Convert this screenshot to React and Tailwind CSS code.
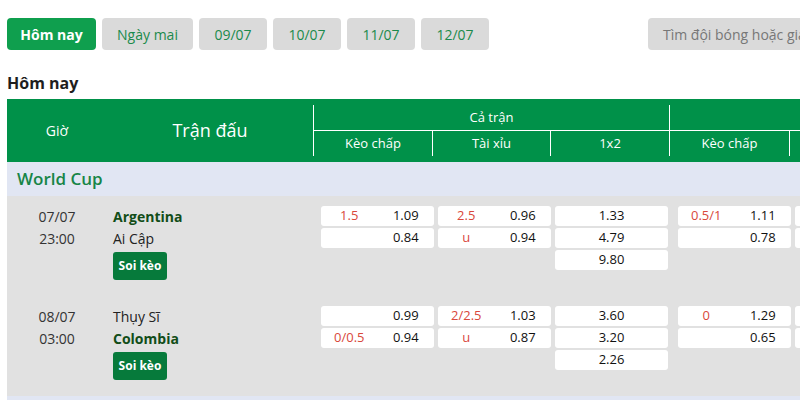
import React from 'react';

const tabs = ['Hôm nay', 'Ngày mai', '09/07', '10/07', '11/07', '12/07'];

const matches = [
  {
    date: '07/07',
    time: '23:00',
    home: 'Argentina',
    away: 'Ai Cập',
    favHome: true,
    ft: {
      hdp: [['1.5', '1.09'], ['', '0.84']],
      ou: [['2.5', '0.96'], ['u', '0.94']],
      x12: ['1.33', '4.79', '9.80'],
    },
    h1: { hdp: [['0.5/1', '1.11'], ['', '0.78']] },
  },
  {
    date: '08/07',
    time: '03:00',
    home: 'Thụy Sĩ',
    away: 'Colombia',
    favHome: false,
    ft: {
      hdp: [['', '0.99'], ['0/0.5', '0.94']],
      ou: [['2/2.5', '1.03'], ['u', '0.87']],
      x12: ['3.60', '3.20', '2.26'],
    },
    h1: { hdp: [['0', '1.29'], ['', '0.65']] },
  },
];

function PairCell({ line, odd }) {
  return (
    <div className="flex h-[20px] w-[113px] items-center rounded-[3px] bg-white text-[13px]">
      <span className="w-1/2 text-center text-[#d9483b]">{line}</span>
      <span className="w-1/2 text-center text-[#111]">{odd}</span>
    </div>
  );
}

function SingleCell({ value }) {
  return (
    <div className="flex h-[20px] w-[113px] items-center justify-center rounded-[3px] bg-white text-[13px] text-[#111]">
      {value}
    </div>
  );
}

function MatchRow({ m }) {
  return (
    <div className="flex h-[100px] bg-[#e1e1e1] pt-[10px]">
      <div className="w-[100px] shrink-0 text-center text-[14px] leading-[22px] text-[#333]">
        <div>{m.date}</div>
        <div>{m.time}</div>
      </div>
      <div className="w-[206px] shrink-0 pl-[6px] text-[14px] leading-[22px]">
        <div className={m.favHome ? 'font-bold text-[#114d18]' : 'text-[#222]'}>{m.home}</div>
        <div className={!m.favHome ? 'font-bold text-[#114d18]' : 'text-[#222]'}>{m.away}</div>
        <button className="mt-[2px] flex h-[28px] w-[54px] items-center justify-center rounded-[3px] bg-[#067a3b] text-[12px] font-bold text-white">
          Soi kèo
        </button>
      </div>
      <div className="flex shrink-0 gap-[4px] pl-[8px]">
        <div className="flex flex-col gap-[2px]">
          {m.ft.hdp.map((r, i) => (
            <PairCell key={i} line={r[0]} odd={r[1]} />
          ))}
        </div>
        <div className="flex flex-col gap-[2px]">
          {m.ft.ou.map((r, i) => (
            <PairCell key={i} line={r[0]} odd={r[1]} />
          ))}
        </div>
        <div className="flex flex-col gap-[2px]">
          {m.ft.x12.map((v, i) => (
            <SingleCell key={i} value={v} />
          ))}
        </div>
        <div className="ml-[6px] flex flex-col gap-[2px]">
          {m.h1.hdp.map((r, i) => (
            <PairCell key={i} line={r[0]} odd={r[1]} />
          ))}
        </div>
        <div className="flex flex-col gap-[2px]">
          <PairCell line="" odd="" />
          <PairCell line="" odd="" />
        </div>
      </div>
    </div>
  );
}

function HeaderGroup({ title, cols }) {
  return (
    <div className="flex shrink-0 flex-col border-l border-white">
      <div className="flex h-[25px] items-center justify-center text-[13px]">{title}</div>
      <div className="flex h-[26px] border-t border-white">
        {cols.map((c, i) => (
          <div
            key={i}
            className={`flex items-center justify-center whitespace-nowrap text-[13px] ${i > 0 ? 'border-l border-white' : ''}`}
            style={{ width: c.w }}
          >
            {c.label}
          </div>
        ))}
      </div>
    </div>
  );
}

export default function App() {
  return (
    <div className="h-[400px] w-[800px] overflow-hidden bg-white font-['Open_Sans','Noto_Sans',sans-serif]">
      <div className="flex w-[1000px] items-center pl-[7px] pt-[18px]">
        <div className="flex gap-[6px]">
          {tabs.map((t, i) => (
            <button
              key={t}
              className={`h-[32px] whitespace-nowrap rounded-[4px] text-[14px] ${
                i === 0 ? 'w-[89px] bg-[#0f9f4e] font-bold text-white' : 'bg-[#dadada] text-[#1b8a4c]'
              } ${i === 1 ? 'w-[91px]' : ''} ${i > 1 ? 'w-[68px]' : ''}`}
            >
              {t}
            </button>
          ))}
        </div>
        <div className="ml-[159px] flex h-[32px] w-[200px] shrink-0 items-center whitespace-nowrap rounded-[4px] bg-[#dadada] pl-[15px] text-[14px] text-[#777]">
          Tìm đội bóng hoặc giải
        </div>
      </div>

      <h2 className="pl-[7px] pt-[22px] text-[16px] font-bold leading-[22px] text-[#1e1e1e]">Hôm nay</h2>

      <div className="ml-[7px] mt-[5px] w-[1100px]">
        <div className="flex h-[63px] bg-[#009149] py-[6px] text-white">
          <div className="flex w-[100px] shrink-0 items-center justify-center text-[14px]">Giờ</div>
          <div className="flex w-[206px] shrink-0 items-center justify-center text-[18px]">Trận đấu</div>
          <HeaderGroup
            title="Cả trận"
            cols={[
              { label: 'Kèo chấp', w: 118 },
              { label: 'Tài xỉu', w: 118 },
              { label: '1x2', w: 119 },
            ]}
          />
          <HeaderGroup
            title="Hiệp 1"
            cols={[
              { label: 'Kèo chấp', w: 119 },
              { label: 'Tài xỉu', w: 118 },
              { label: '1x2', w: 119 },
            ]}
          />
        </div>
        <div className="flex h-[34px] items-center bg-[#e1e6f3] pl-[10px] text-[17px] font-semibold text-[#178547]">
          World Cup
        </div>
        {matches.map((m) => (
          <MatchRow key={m.date} m={m} />
        ))}
        <div className="h-[34px] bg-[#e1e6f3]" />
      </div>
    </div>
  );
}
